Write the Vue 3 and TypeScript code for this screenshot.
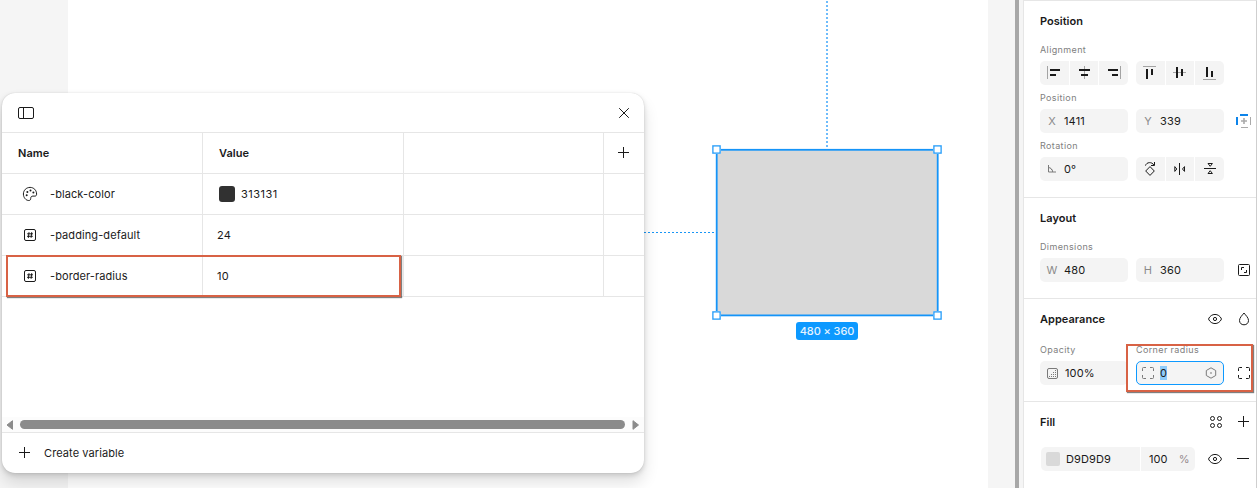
<script setup lang="ts">
interface Variable {
  kind: 'color' | 'number'
  name: string
  value: string
}

const variables: Variable[] = [
  { kind: 'color', name: '-black-color', value: '313131' },
  { kind: 'number', name: '-padding-default', value: '24' },
  { kind: 'number', name: '-border-radius', value: '10' },
]

interface AlignIcon {
  guide: string
  bars: string
}

const alignGroups: AlignIcon[][] = [
  [
    { guide: 'M7 5h1v13h-1z', bars: 'M10 8h10v2h-10zM10 13h6v2h-6z' },
    { guide: 'M14 5h1v13h-1z', bars: 'M9 8h11v2h-11zM11 13h7v2h-7z' },
    { guide: 'M21 5h1v13h-1z', bars: 'M9 8h10v2h-10zM13 13h6v2h-6z' },
  ],
  [
    { guide: 'M7 5h13v1h-13z', bars: 'M10 8h2v10h-2zM15 8h2v6h-2z' },
    { guide: 'M7 11h13v1h-13z', bars: 'M10 6h2v11h-2zM15 8h2v7h-2z' },
    { guide: 'M8 18h13v1h-13z', bars: 'M11 6h2v10h-2zM16 10h2v6h-2z' },
  ],
]

const transformIcons: string[] = [
  'M14 9.6L18.3 14 14 18.4 9.7 14ZM9.5 8.6C10.5 4.9 16 4.6 17.8 8M18.5 5v3.5h-3.5',
  'M13.5 6v12M8.8 9.6v4.8l2-2.4zM18.5 9.6v4.8l-2-2.4z',
  'M9 11.5h12M13 6.5h4.4l-2.2 2.8zM13 16.5h4.4l-2.2-2.8z',
]

const handles: [number, number][] = [[716.5, 149.5], [937.5, 149.5], [716.5, 315.5], [937.5, 315.5]]
</script>

<template>
  <div class="editor">
    <main class="canvas">
      <svg class="artboard" width="1015" height="488" viewBox="0 0 1015 488">
        <rect x="68" y="0" width="920" height="488" fill="#fff" />
        <path d="M827 1V148" stroke="#6fbcfb" stroke-width="2" stroke-dasharray="2 2" />
        <path d="M644 232.5H716" stroke="#1a96f5" stroke-width="1" stroke-dasharray="2 2" />
        <rect x="717" y="150" width="220.5" height="165.5" fill="#d9d9d9" />
        <rect x="716.7" y="149.8" width="221" height="165.6" fill="none" stroke="#1594f8" stroke-width="1.8" />
        <g v-for="(h, i) in handles" :key="i">
          <rect :x="h[0] - 4.5" :y="h[1] - 4.5" width="9" height="9" fill="#9bd2fc" />
          <rect :x="h[0] - 3.5" :y="h[1] - 3.5" width="7" height="7" fill="#fff" stroke="#1594f8" stroke-width="1" />
        </g>
      </svg>
      <div class="size-badge">480 × 360</div>

      <section class="modal">
        <header class="modal-head">
          <svg width="16" height="12" viewBox="0 0 16 12" class="ico"><rect x=".5" y=".5" width="15" height="11" rx="1.5" /><path d="M5.5.5v11" /></svg>
          <svg width="12" height="12" viewBox="0 0 12 12" class="ico"><path d="M1.2 1.2l9.6 9.6M10.8 1.2L1.2 10.8" /></svg>
        </header>
        <div class="row head-row">
          <div class="cell title">Name</div>
          <div class="cell title">Value</div>
          <div class="cell"></div>
          <div class="cell add"><svg width="11" height="11" viewBox="0 0 11 11" class="ico"><path d="M5.5 0v11M0 5.5h11" /></svg></div>
        </div>
        <div v-for="v in variables" :key="v.name" class="row">
          <div class="cell name">
            <svg v-if="v.kind === 'color'" width="16" height="16" viewBox="0 0 16 16" class="ico">
              <path d="M8.1 1.4C4.3 1.4 1.4 4.3 1.4 8c0 3.600 2.600 6.500 5.300 6.500 1.500 0 2-.8 2-2 0-1.500.7-2.400 2.200-2.400h2c1.200 0 1.700-.8 1.700-2C14.600 4.300 11.800 1.400 8.100 1.400z" />
              <g class="solid"><circle cx="4.700" cy="9.300" r="1" /><circle cx="5.400" cy="6" r="1" /><circle cx="8.500" cy="4.600" r="1" /><circle cx="11.400" cy="6.600" r="1" /></g>
            </svg>
            <svg v-else width="16" height="16" viewBox="0 0 16 16" class="ico">
              <rect x="2.500" y="2.500" width="11" height="11" rx="1.500" />
              <path d="M7 5.200l-.6 5.600M9.700 5.200l-.6 5.600M5.200 6.800h5.800M5 9.300h5.800" />
            </svg>
            <span>{{ v.name }}</span>
          </div>
          <div class="cell value" :class="v.kind"><i v-if="v.kind === 'color'" class="swatch"></i>{{ v.value }}</div>
          <div class="cell"></div>
          <div class="cell"></div>
        </div>
        <div class="spacer"></div>
        <div class="scrollbar">
          <svg width="8" height="10" viewBox="0 0 8 10"><path d="M6.500.7v8.600L1 5z" fill="#8b8b8b" stroke="#8b8b8b" stroke-linejoin="round" /></svg>
          <div class="thumb"></div>
          <svg width="8" height="10" viewBox="0 0 8 10"><path d="M1 .7v8.600L6.500 5z" fill="#8b8b8b" stroke="#8b8b8b" stroke-linejoin="round" /></svg>
        </div>
        <footer class="modal-foot">
          <svg width="11" height="11" viewBox="0 0 11 11" class="ico"><path d="M5.500 0v11M0 5.500h11" /></svg>
          <span>Create variable</span>
        </footer>
      </section>
    </main>

    <div class="divider"></div>

    <aside class="panel">
      <section class="block position">
        <h2>Position</h2>
        <label>Alignment</label>
        <div class="controls">
          <div v-for="(group, g) in alignGroups" :key="g" class="group">
            <span v-for="(icon, i) in group" :key="i">
              <svg width="29" height="24" viewBox="0 0 29 24"><path :d="icon.guide" fill="#a3a3a3" /><path :d="icon.bars" fill="#1a1a1a" /></svg>
            </span>
          </div>
        </div>
        <label>Position</label>
        <div class="controls">
          <div class="field"><em>X</em>1411</div>
          <div class="field"><em>Y</em>339</div>
          <svg width="24" height="24" viewBox="0 0 24 24">
            <path d="M8 5h8v2H8zM4 8h2v8H4z" fill="#0d84ea" />
            <path d="M18.500 8v8M9 18.500h7" stroke="#aaa" /><path d="M12 9v6M9 12h6" stroke="#aaa" stroke-width="1.600" />
          </svg>
        </div>
        <label>Rotation</label>
        <div class="controls">
          <div class="field"><em><svg width="10" height="8" viewBox="0 0 10 8" class="ico muted"><path d="M1.500 0v7H9M1.500 2.500c2.500.3 4 2 4.200 4.500M3.500 3.500l2 2" /></svg></em>0°</div>
          <div class="group">
            <span v-for="d in transformIcons" :key="d"><svg width="29" height="24" viewBox="0 0 29 24" class="ico"><path :d="d" stroke-linejoin="round" /></svg></span>
          </div>
        </div>
      </section>

      <section class="block layout">
        <h2>Layout</h2>
        <label>Dimensions</label>
        <div class="controls">
          <div class="field"><em>W</em>480</div>
          <div class="field"><em>H</em>360</div>
          <svg width="24" height="24" viewBox="0 0 24 24" class="ico"><rect x="6.500" y="6.500" width="11" height="11" rx="1" /><path d="M9.500 12V9.500H12M14.500 12v2.500H12" /></svg>
        </div>
      </section>

      <section class="block appearance">
        <div class="heading">
          <h2>Appearance</h2>
          <svg width="24" height="24" viewBox="0 0 24 24" class="ico"><path d="M5.500 12C8 5.900 16 5.900 18.500 12 16 18.100 8 18.100 5.500 12z" /><circle cx="12" cy="12" r="1.600" /></svg>
          <svg width="24" height="24" viewBox="0 0 24 24" class="ico"><path d="M12 6C10.200 8.400 7.500 10.700 7.500 13.500c0 2.600 1.900 4.300 4.500 4.300s4.500-1.700 4.500-4.300C16.500 10.700 13.800 8.400 12 6z" /></svg>
        </div>
        <div class="labels"><label>Opacity</label><label>Corner radius</label></div>
        <div class="controls">
          <div class="field opacity"><em><svg width="11" height="11" viewBox="0 0 11 11" class="ico muted"><rect x=".5" y=".5" width="10" height="10" rx="1.500" /><path d="M2 8.500h7M4 6.500h5M6 4.500h3M8 2.500h1" stroke-dasharray="1 1" /></svg></em>100%</div>
          <div class="field active">
            <em><svg width="12" height="12" viewBox="0 0 12 12" class="ico muted"><path d="M.5 4V1.500q0-1 1-1H4M8 .5h2.500q1 0 1 1V4M11.500 8v2.500q0 1-1 1H8M4 11.500H1.500q-1 0-1-1V8" /></svg></em>
            <mark>0</mark>
            <svg width="12" height="12" viewBox="0 0 12 12" class="ico muted hex"><path d="M6 .8l4.700 2.700v5L6 11.200 1.300 8.500v-5z" stroke-linejoin="round" /><circle cx="6" cy="6" r=".4" /></svg>
          </div>
          <svg width="24" height="24" viewBox="0 0 24 24" class="ico"><path d="M6.500 10V7.500q0-1 1-1H10M14 6.500h2.500q1 0 1 1V10M17.500 14v2.500q0 1-1 1H14M10 17.500H7.500q-1 0-1-1V14" /></svg>
        </div>
      </section>

      <section class="block fill">
        <div class="heading">
          <h2>Fill</h2>
          <svg width="24" height="24" viewBox="0 0 24 24" class="ico four"><circle cx="9.500" cy="8.500" r="2" /><circle cx="16.500" cy="8.500" r="2" /><circle cx="9.500" cy="15.500" r="2" /><circle cx="16.500" cy="15.500" r="2" /></svg>
          <svg width="24" height="24" viewBox="0 0 24 24" class="ico"><path d="M11.500 6v11M6 11.500h11" /></svg>
        </div>
        <div class="fill-row">
          <div class="hex-field"><i></i>D9D9D9</div>
          <div class="pct-field">100<span>%</span></div>
          <svg width="24" height="24" viewBox="0 0 24 24" class="ico eye"><path d="M5.500 12C8 5.900 16 5.900 18.500 12 16 18.100 8 18.100 5.500 12z" /><circle cx="12" cy="12" r="1.600" /></svg>
          <svg width="24" height="24" viewBox="0 0 24 24" class="ico"><path d="M5 11.500h12" /></svg>
        </div>
      </section>
    </aside>

    <div class="callout callout-variable"></div>
    <div class="callout callout-radius"></div>
  </div>
</template>

<style>
body {
  overflow: hidden;
}
</style>

<style scoped>
* {
  box-sizing: border-box;
}
.editor {
  position: relative;
  display: flex;
  width: 1257px;
  height: 488px;
  overflow: hidden;
  background: #f5f5f5;
  color: #1a1a1a;
  font-family: Inter, 'Liberation Sans', sans-serif;
  font-size: 11px;
  line-height: 16px;
  letter-spacing: 0.09px;
}
svg {
  display: block;
  flex: none;
}
.ico {
  fill: none;
  stroke: #1a1a1a;
  stroke-width: 1;
}
.muted {
  stroke: #7a7a7a;
}
.solid {
  fill: #1a1a1a;
  stroke: none;
}
.canvas {
  position: relative;
  width: 1015px;
  height: 488px;
  flex: none;
}
.size-badge {
  position: absolute;
  left: 796px;
  top: 322px;
  width: 62px;
  height: 18px;
  border-radius: 3px;
  background: #0d99ff;
  color: #e4f3ff;
  font-weight: 500;
  line-height: 18px;
  letter-spacing: -0.1px;
  text-align: center;
  white-space: nowrap;
}
.modal {
  position: absolute;
  left: 2px;
  top: 93px;
  width: 642px;
  height: 380px;
  display: flex;
  flex-direction: column;
  overflow: hidden;
  border-radius: 13px;
  background: #fff;
  box-shadow: 0 2px 5px rgba(0, 0, 0, 0.15), 0 10px 16px rgba(0, 0, 0, 0.12), 0 0 1px rgba(0, 0, 0, 0.2);
}
.modal-head {
  display: flex;
  align-items: center;
  justify-content: space-between;
  height: 40px;
  padding: 0 14px 0 16px;
  border-bottom: 1px solid #e6e6e6;
}
.row {
  display: grid;
  grid-template-columns: 201px 201px 200px 40px;
  height: 41px;
  border-bottom: 1px solid #e6e6e6;
}
.cell {
  display: flex;
  align-items: center;
  border-right: 1px solid #e6e6e6;
}
.cell:last-child {
  border-right: 0;
}
.title {
  padding-left: 16px;
  font-weight: 600;
  letter-spacing: 0.05px;
}
.add {
  justify-content: center;
  padding: 0 1px 1px 0;
}
.name {
  gap: 12px;
  padding-left: 20px;
}
.value {
  padding-left: 14px;
  letter-spacing: 0.3px;
}
.value.color {
  padding-left: 16px;
  letter-spacing: 0.5px;
}
.swatch {
  width: 16px;
  height: 16px;
  margin-right: 6px;
  border-radius: 3px;
  background: #313131;
}
.spacer {
  flex: 1;
}
.scrollbar {
  display: flex;
  align-items: center;
  gap: 6px;
  height: 15px;
  padding: 0 4px;
  background: #fcfcfc;
}
.scrollbar svg:last-child {
  margin-left: auto;
}
.thumb {
  width: 605px;
  height: 9px;
  border-radius: 5px;
  background: #8b8b8b;
}
.modal-foot {
  display: flex;
  align-items: center;
  gap: 14px;
  height: 41px;
  padding-left: 17px;
  border-top: 1px solid #e6e6e6;
}
.modal-foot svg {
  margin-bottom: 1px;
}
.divider {
  width: 8px;
  border-left: 4px solid #a8a8a8;
  flex: none;
}
.panel {
  width: 234px;
  height: 488px;
  border: 1px solid #e6e6e6;
  border-right-color: #cfcfcf;
  border-bottom: 0;
  background: #fff;
}
.block {
  padding-left: 16px;
  border-bottom: 1px solid #e6e6e6;
}
.position {
  height: 197px;
  padding-top: 12px;
}
.layout {
  height: 101px;
  padding-top: 12px;
}
.appearance {
  height: 103px;
  padding-top: 8px;
}
.fill {
  padding-top: 8px;
  border-bottom: 0;
}
h2 {
  margin: 0;
  font-size: 11px;
  font-weight: 600;
  line-height: 16px;
  letter-spacing: 0.02px;
}
label {
  display: block;
  height: 24px;
  padding-top: 5px;
  color: #808080;
  font-size: 9px;
  line-height: 16px;
  letter-spacing: 0.37px;
}
h2 + label {
  height: 32px;
  padding-top: 13px;
}
.controls {
  display: flex;
  gap: 8px;
  height: 24px;
}
.group {
  display: grid;
  grid-template-columns: 29px 28px 29px;
  gap: 1px;
  width: 88px;
  overflow: hidden;
  border-radius: 5px;
}
.group span {
  overflow: hidden;
  background: #f4f4f4;
}
.field {
  display: flex;
  align-items: center;
  width: 88px;
  height: 24px;
  border-radius: 5px;
  background: #f4f4f4;
  letter-spacing: 0.15px;
}
.field em {
  display: flex;
  justify-content: center;
  width: 24px;
  color: #8a8a8a;
  font-style: normal;
}
.field.opacity em {
  width: 25px;
}
.field.active {
  border: 1px solid #0d99ff;
}
.field.active em {
  width: 23px;
  padding-right: 1px;
}
mark {
  width: 7px;
  background: #8ecbfa;
  color: #1a1a1a;
  line-height: 14px;
}
.hex {
  margin: 0 6px 0 auto;
}
.heading {
  display: flex;
  align-items: center;
  gap: 5px;
  height: 24px;
}
.heading h2 {
  margin-right: auto;
}
.labels {
  display: grid;
  grid-template-columns: 96px 1fr;
  height: 30px;
  padding-top: 6px;
}
.fill-row {
  display: flex;
  width: 216px;
  margin-top: 13px;
  padding-left: 1px;
}
.hex-field,
.pct-field {
  display: flex;
  align-items: center;
  height: 24px;
  background: #f4f4f4;
}
.hex-field {
  width: 99px;
  border-radius: 5px 0 0 5px;
}
.hex-field i {
  width: 14px;
  height: 14px;
  margin: 0 6px 0 5px;
  border-radius: 2px;
  background: #d9d9d9;
}
.pct-field {
  width: 54px;
  margin-left: 1px;
  padding-left: 8px;
  border-radius: 0 5px 5px 0;
}
.pct-field span {
  margin-left: 11px;
  color: #948a8e;
}
.eye {
  margin: 0 5px 0 8px;
}
.callout {
  position: absolute;
  border: 2px solid #d86245;
  box-shadow: 1px 1px 1px rgba(0, 0, 0, 0.5);
}
.callout-variable {
  left: 6px;
  top: 255px;
  width: 395px;
  height: 42px;
}
.callout-radius {
  left: 1126px;
  top: 344px;
  width: 127px;
  height: 48px;
}
</style>
